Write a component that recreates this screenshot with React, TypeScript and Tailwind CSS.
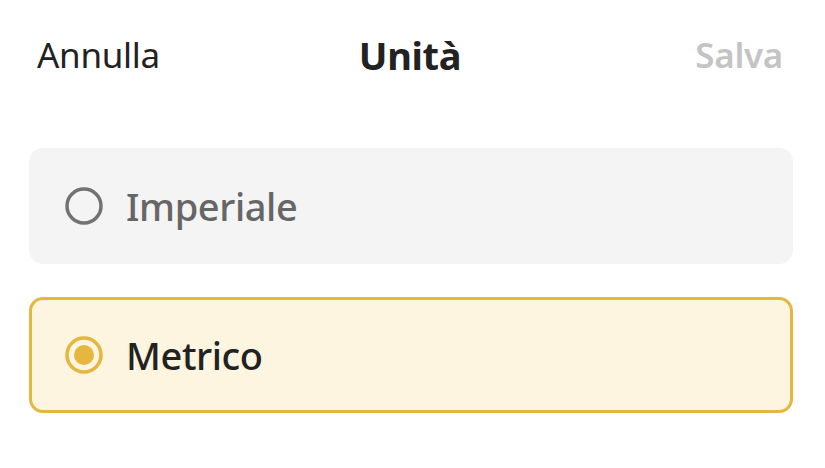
import React, { useState } from "react";

type Unit = "imperial" | "metric";

const options: { id: Unit; label: string }[] = [
  { id: "imperial", label: "Imperiale" },
  { id: "metric", label: "Metrico" },
];

const Radio = ({ checked }: { checked: boolean }) =>
  checked ? (
    <svg width="40" height="40" viewBox="0 0 40 40">
      <circle cx="20" cy="20" r="17" fill="none" stroke="#e5b73f" strokeWidth="3.5" />
      <circle cx="20" cy="20" r="10" fill="#e5b73f" />
    </svg>
  ) : (
    <svg width="40" height="40" viewBox="0 0 40 40">
      <circle cx="20" cy="20" r="17" fill="none" stroke="#727272" strokeWidth="3.5" />
    </svg>
  );

export default function App() {
  const [unit, setUnit] = useState<Unit>("metric");

  return (
    <div
      className="w-[825px] h-[468px] bg-white"
      style={{ fontFamily: '"Noto Sans", "Open Sans", sans-serif' }}
    >
      {/* header */}
      <div className="flex items-center h-[112px] pl-[37px] pr-[42px] pb-[2px]">
        <div className="flex-1">
          <button className="text-[35px] text-[#222] tracking-[-0.3px]">Annulla</button>
        </div>
        <h1 className="text-[38px] font-bold text-[#222] tracking-[-0.3px]">Unità</h1>
        <div className="flex-1 flex justify-end">
          <button className="text-[35px] font-semibold text-[#c4c4c4] tracking-[-0.3px]">Salva</button>
        </div>
      </div>

      <div className="flex flex-col gap-[33px] pl-[29px] pr-[32px] pt-[36px]">
        {options.map(o => {
          const active = unit === o.id;
          return (
            <button
              key={o.id}
              onClick={() => setUnit(o.id)}
              className={`flex items-center gap-[22px] h-[116px] rounded-[14px] text-left ${
                active
                  ? "bg-[#fdf5e0] border-[3px] border-[#e5b73f] pl-[32px]"
                  : "bg-[#f4f4f4] pl-[35px]"
              }`}
            >
              <Radio checked={active} />
              <span
                className={`text-[38px] tracking-[-0.4px] ${
                  active ? "text-[#222] font-medium" : "text-[#666] font-medium"
                }`}
              >
                {o.label}
              </span>
            </button>
          );
        })}
      </div>
    </div>
  );
}
